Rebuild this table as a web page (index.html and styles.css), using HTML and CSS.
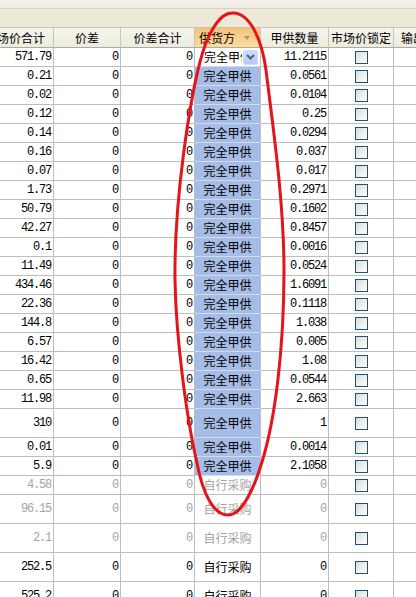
FILE: index.html
```html
<!DOCTYPE html>
<html lang="zh">
<head>
<meta charset="utf-8">
<title>供货方</title>
<link rel="stylesheet" href="styles.css">
</head>
<body>
<div class="app">
  <div class="topbar"></div>
  <div class="band"></div>
  <div class="view">
    <div class="grid">
      <div class="row head">
        <div class="c h">市场价合计</div>
        <div class="c h">价差</div>
        <div class="c h">价差合计</div>
        <div class="c h sorted"><span>供货方</span><span class="tri"></span></div>
        <div class="c h">甲供数量</div>
        <div class="c h">市场价锁定</div>
        <div class="c h last">输出</div>
      </div>

      <div class="row"><div class="c n">571.79</div><div class="c n">0</div><div class="c n p3">0</div><div class="c combo"><span class="ctext">完全甲供</span><span class="cbtn"><svg width="9" height="6" viewBox="0 0 9 6"><path d="M1 1 L4.5 4.5 L8 1" fill="none" stroke="#4d6185" stroke-width="2"/></svg></span></div><div class="c n">11.2115</div><div class="c chk"><span class="box"></span></div><div class="c"></div></div>
      <div class="row"><div class="c n">0.21</div><div class="c n">0</div><div class="c n p3">0</div><div class="c sel">完全甲供</div><div class="c n">0.0561</div><div class="c chk"><span class="box"></span></div><div class="c"></div></div>
      <div class="row"><div class="c n">0.02</div><div class="c n">0</div><div class="c n p3">0</div><div class="c sel">完全甲供</div><div class="c n">0.0104</div><div class="c chk"><span class="box"></span></div><div class="c"></div></div>
      <div class="row"><div class="c n">0.12</div><div class="c n">0</div><div class="c n p3">0</div><div class="c sel">完全甲供</div><div class="c n">0.25</div><div class="c chk"><span class="box"></span></div><div class="c"></div></div>
      <div class="row"><div class="c n">0.14</div><div class="c n">0</div><div class="c n p3">0</div><div class="c sel">完全甲供</div><div class="c n">0.0294</div><div class="c chk"><span class="box"></span></div><div class="c"></div></div>
      <div class="row"><div class="c n">0.16</div><div class="c n">0</div><div class="c n p3">0</div><div class="c sel">完全甲供</div><div class="c n">0.037</div><div class="c chk"><span class="box"></span></div><div class="c"></div></div>
      <div class="row"><div class="c n">0.07</div><div class="c n">0</div><div class="c n p3">0</div><div class="c sel">完全甲供</div><div class="c n">0.017</div><div class="c chk"><span class="box"></span></div><div class="c"></div></div>
      <div class="row"><div class="c n">1.73</div><div class="c n">0</div><div class="c n p3">0</div><div class="c sel">完全甲供</div><div class="c n">0.2971</div><div class="c chk"><span class="box"></span></div><div class="c"></div></div>
      <div class="row"><div class="c n">50.79</div><div class="c n">0</div><div class="c n p3">0</div><div class="c sel">完全甲供</div><div class="c n">0.1602</div><div class="c chk"><span class="box"></span></div><div class="c"></div></div>
      <div class="row"><div class="c n">42.27</div><div class="c n">0</div><div class="c n p3">0</div><div class="c sel">完全甲供</div><div class="c n">0.8457</div><div class="c chk"><span class="box"></span></div><div class="c"></div></div>
      <div class="row"><div class="c n">0.1</div><div class="c n">0</div><div class="c n p3">0</div><div class="c sel">完全甲供</div><div class="c n">0.0016</div><div class="c chk"><span class="box"></span></div><div class="c"></div></div>
      <div class="row"><div class="c n">11.49</div><div class="c n">0</div><div class="c n p3">0</div><div class="c sel">完全甲供</div><div class="c n">0.0524</div><div class="c chk"><span class="box"></span></div><div class="c"></div></div>
      <div class="row"><div class="c n">434.46</div><div class="c n">0</div><div class="c n p3">0</div><div class="c sel">完全甲供</div><div class="c n">1.6091</div><div class="c chk"><span class="box"></span></div><div class="c"></div></div>
      <div class="row"><div class="c n">22.36</div><div class="c n">0</div><div class="c n p3">0</div><div class="c sel">完全甲供</div><div class="c n">0.1118</div><div class="c chk"><span class="box"></span></div><div class="c"></div></div>
      <div class="row"><div class="c n">144.8</div><div class="c n">0</div><div class="c n p3">0</div><div class="c sel">完全甲供</div><div class="c n">1.038</div><div class="c chk"><span class="box"></span></div><div class="c"></div></div>
      <div class="row"><div class="c n">6.57</div><div class="c n">0</div><div class="c n p3">0</div><div class="c sel">完全甲供</div><div class="c n">0.005</div><div class="c chk"><span class="box"></span></div><div class="c"></div></div>
      <div class="row"><div class="c n">16.42</div><div class="c n">0</div><div class="c n p3">0</div><div class="c sel">完全甲供</div><div class="c n">1.08</div><div class="c chk"><span class="box"></span></div><div class="c"></div></div>
      <div class="row"><div class="c n">0.65</div><div class="c n">0</div><div class="c n p3">0</div><div class="c sel">完全甲供</div><div class="c n">0.0544</div><div class="c chk"><span class="box"></span></div><div class="c"></div></div>
      <div class="row"><div class="c n">11.98</div><div class="c n">0</div><div class="c n p3">0</div><div class="c sel">完全甲供</div><div class="c n">2.663</div><div class="c chk"><span class="box"></span></div><div class="c"></div></div>
      <div class="row tall"><div class="c n">310</div><div class="c n">0</div><div class="c n p3">0</div><div class="c sel">完全甲供</div><div class="c n">1</div><div class="c chk"><span class="box"></span></div><div class="c"></div></div>
      <div class="row"><div class="c n">0.01</div><div class="c n">0</div><div class="c n p3">0</div><div class="c sel">完全甲供</div><div class="c n">0.0014</div><div class="c chk"><span class="box"></span></div><div class="c"></div></div>
      <div class="row"><div class="c n">5.9</div><div class="c n">0</div><div class="c n p3">0</div><div class="c sel">完全甲供</div><div class="c n">2.1058</div><div class="c chk"><span class="box"></span></div><div class="c"></div></div>
      <div class="row dim"><div class="c n">4.58</div><div class="c n">0</div><div class="c n p3">0</div><div class="c own">自行采购</div><div class="c n">0</div><div class="c chk"><span class="box"></span></div><div class="c"></div></div>
      <div class="row tall dim"><div class="c n">96.15</div><div class="c n">0</div><div class="c n p3">0</div><div class="c own">自行采购</div><div class="c n">0</div><div class="c chk"><span class="box"></span></div><div class="c"></div></div>
      <div class="row tall dim"><div class="c n">2.1</div><div class="c n">0</div><div class="c n p3">0</div><div class="c own">自行采购</div><div class="c n">0</div><div class="c chk"><span class="box"></span></div><div class="c"></div></div>
      <div class="row tall"><div class="c n">252.5</div><div class="c n">0</div><div class="c n p3">0</div><div class="c own">自行采购</div><div class="c n">0</div><div class="c chk"><span class="box"></span></div><div class="c"></div></div>
      <div class="row tall"><div class="c n">525.2</div><div class="c n">0</div><div class="c n p3">0</div><div class="c own">自行采购</div><div class="c n">0</div><div class="c chk"><span class="box"></span></div><div class="c"></div></div>
    </div>
  </div>
  <svg class="annot" width="416" height="597" viewBox="0 0 416 597">
    <path d="M232,13 C250,12 262,40 266,70 C272,120 284,200 284,270 C284,350 275,420 262,462 C252,495 240,515 228,515 C214,515 203,495 197,463 C187,420 176,340 175,280 C174,200 190,100 200,62 C206,38 218,13 232,13 Z" fill="none" stroke="#e3141b" stroke-width="3"/>
  </svg>
</div>
</body>
</html>
```

FILE: styles.css
```css
html, body {
  margin: 0;
  padding: 0;
  background: #ffffff;
}

body {
  font-family: "Noto Sans CJK SC", "Noto Sans", sans-serif;
  font-size: 12px;
  color: #000000;
}

.app {
  position: relative;
  width: 416px;
  height: 597px;
  overflow: hidden;
}

.topbar {
  height: 8px;
  background: linear-gradient(#f4f3ec, #efede3);
  border-bottom: 1px solid #d8d4c4;
}

.band {
  height: 18px;
  background: #ece9d8;
  border-bottom: 1px solid #c6c3b2;
}

.view {
  overflow: hidden;
}

.grid {
  margin-left: -23px;
  width: 560px;
}

.row {
  display: grid;
  grid-template-columns: 77px 67px 74px 66px 68px 65px 143px;
  height: 19px;
}

.row.tall {
  height: 29px;
}

.row.head {
  height: 20px;
}

.c {
  box-sizing: border-box;
  border-right: 1px solid #bdbdbd;
  border-bottom: 1px solid #bdbdbd;
  display: flex;
  align-items: center;
  justify-content: flex-end;
  overflow: hidden;
  white-space: nowrap;
  line-height: 1;
}

.n {
  font-family: "Liberation Mono", "DejaVu Sans Mono", monospace;
  font-size: 12px;
  letter-spacing: -1.2px;
  padding-right: 2px;
}

.n.p3 {
  padding-right: 2px;
}

.h {
  justify-content: center;
  background: linear-gradient(#f6f5ef, #ecebdf);
  border-right-color: #c9c6b6;
  border-bottom-color: #aeab98;
}

.h.last {
  justify-content: flex-start;
  padding-left: 7px;
}

.h.sorted {
  justify-content: flex-start;
  padding-left: 4px;
  gap: 9px;
  background: linear-gradient(#f6c27c, #fcdba0);
}

.tri {
  width: 0;
  height: 0;
  border-left: 3.5px solid transparent;
  border-right: 3.5px solid transparent;
  border-top: 4px solid #9a9690;
  margin-top: 1px;
}

.sel {
  justify-content: center;
  background: #a4bce6;
  border-bottom-color: #d3dbeb;
}

.own {
  justify-content: center;
}

.combo {
  justify-content: space-between;
  padding-left: 9px;
  padding-right: 2px;
  background: #ffffff;
  border-bottom-color: #d3dbeb;
}

.ctext {
  overflow: hidden;
  width: 38px;
  flex: none;
}

.cbtn {
  width: 15px;
  height: 15px;
  box-sizing: border-box;
  border: 1px solid #d0dbf7;
  border-radius: 2px;
  background: linear-gradient(#cfdcfd, #b6c9f7);
  display: flex;
  align-items: center;
  justify-content: center;
}

.chk {
  justify-content: center;
  padding-left: 1px;
}

.box {
  width: 13px;
  height: 13px;
  box-sizing: border-box;
  border: 1px solid #1c5180;
  background: linear-gradient(135deg, #dcdcd7, #ffffff);
}

.dim .c {
  color: #a3a3a3;
}

.annot {
  position: absolute;
  left: 0;
  top: 0;
  pointer-events: none;
}
```
